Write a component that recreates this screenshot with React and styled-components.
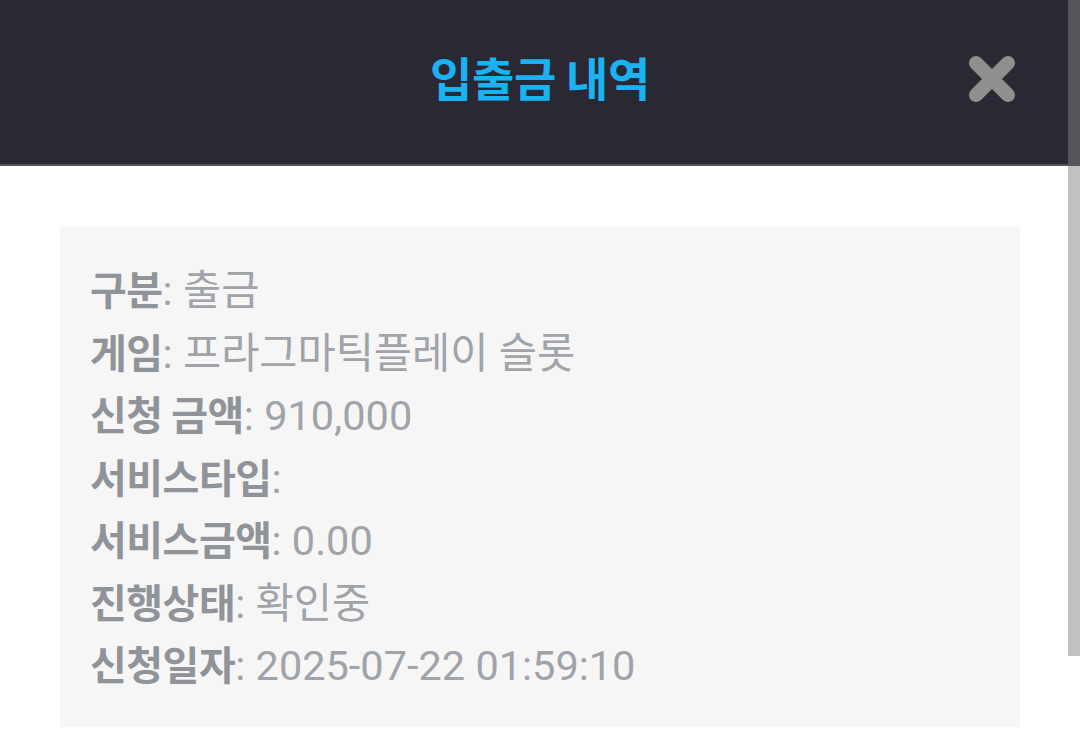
import React from "react";
import styled, { createGlobalStyle } from "styled-components";

const Global = createGlobalStyle`
  html, body { margin: 0; padding: 0; background: #ffffff; overflow: hidden; }
  body { font-family: Roboto, "Noto Sans CJK KR", sans-serif; }
`;

const Page = styled.div`
  width: 1080px;
  height: 733px;
  display: flex;
  flex-direction: column;
  background: #ffffff;
`;

const Header = styled.header`
  height: 164px;
  flex: none;
  background: #2a2933;
  border-bottom: 2px solid #55545b;
  display: grid;
  grid-template-columns: 1fr auto 1fr;
  align-items: center;
`;

const Title = styled.h1`
  grid-column: 2;
  margin: 0 0 12px 0;
  font-family: "Noto Sans CJK KR", sans-serif;
  font-weight: 700;
  font-size: 46px;
  letter-spacing: -0.3px;
  color: #1ab2f2;
`;

const CloseButton = styled.button`
  grid-column: 3;
  justify-self: end;
  margin: 0 64px 6px 0;
  width: 48px;
  height: 48px;
  padding: 0;
  border: none;
  background: none;
  display: flex;
  align-items: center;
  justify-content: center;
  cursor: pointer;
`;

const Body = styled.main`
  padding: 61px 60px 0 60px;
`;

const Card = styled.section`
  background: #f6f6f7;
  padding: 30px 30px 33px 30px;
  height: 500px;
  box-sizing: border-box;
`;

const Row = styled.div`
  height: 62.5px;
  font-size: 41.5px;
  line-height: 62.5px;
  color: #a0a3a7;
  white-space: nowrap;
`;

const Label = styled.span`
  font-family: "Noto Sans CJK KR", sans-serif;
  font-weight: 700;
  font-size: 40px;
  color: #909397;
  letter-spacing: -0.5px;
`;

const Value = styled.span`
  font-family: Roboto, "Noto Sans CJK KR", sans-serif;
  font-weight: 400;
`;

const Scrollbar = styled.div`
  position: fixed;
  top: 0;
  right: 0;
  width: 12px;
  height: 733px;
  display: flex;
  flex-direction: column;
  pointer-events: none;
`;

const ThumbDark = styled.div`
  height: 166px;
  background: #56555c;
`;

const ThumbLight = styled.div`
  height: 490px;
  background: #c1c1c1;
`;

const rows = [
  ["구분", " 출금"],
  ["게임", " 프라그마틱플레이 슬롯"],
  ["신청 금액", " 910,000"],
  ["서비스타입", ""],
  ["서비스금액", " 0.00"],
  ["진행상태", " 확인중"],
  ["신청일자", " 2025-07-22 01:59:10"],
];

export default function App() {
  return (
    <Page>
      <Global />
      <Header>
        <Title>입출금 내역</Title>
        <CloseButton aria-label="close">
          <svg width="48" height="48" viewBox="0 0 48 48">
            <path
              d="M8 8 L40 40 M40 8 L8 40"
              stroke="#8f8f8f"
              strokeWidth="14"
              strokeLinecap="round"
            />
          </svg>
        </CloseButton>
      </Header>
      <Body>
        <Card>
          {rows.map(([label, value]) => (
            <Row key={label}>
              <Label>{label}</Label>
              <Value>:{value}</Value>
            </Row>
          ))}
        </Card>
      </Body>
      <Scrollbar>
        <ThumbDark />
        <ThumbLight />
      </Scrollbar>
    </Page>
  );
}
